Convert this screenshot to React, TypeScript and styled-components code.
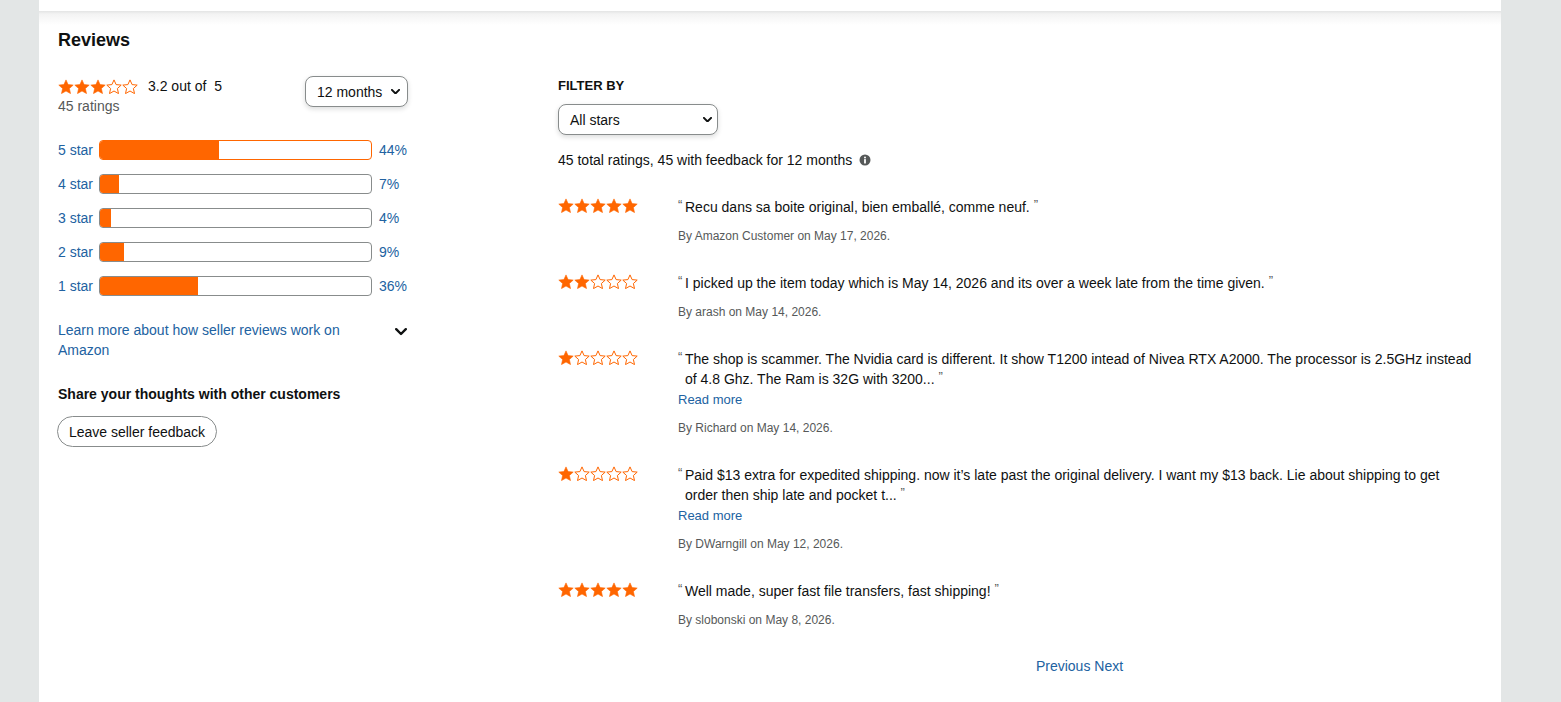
import React from "react";
import styled, { createGlobalStyle } from "styled-components";

const GlobalStyle = createGlobalStyle`
  html, body { margin: 0; padding: 0; background: #e3e6e6; }
  body {
    font-family: "Liberation Sans", Arial, sans-serif;
    color: #0f1111;
    font-size: 14px;
    line-height: 20px;
  }
  * { box-sizing: border-box; }
`;

const ORANGE = "#ff6600";
const LINK = "#2162a1";
const MUTED = "#565959";

const Page = styled.div`
  width: 1462px;
  margin-left: 39px;
  min-height: 702px;
  background: #fff;
`;

const TopCard = styled.div`
  height: 11px;
  background: #fff;
`;

const Shade = styled.div`
  height: 14px;
  background: linear-gradient(to bottom, #e3e4e4 0, #f3f3f3 3px, #ffffff 14px);
`;

const Section = styled.section`
  padding: 3px 20px 20px 19px;
`;

const Heading = styled.h2`
  margin: 0 0 24px 0;
  font-size: 18px;
  line-height: 24px;
  font-weight: 700;
`;

const Columns = styled.div`
  display: grid;
  grid-template-columns: 350px 1fr;
  column-gap: 150px;
`;

const LeftCol = styled.div`
  display: flex;
  flex-direction: column;
`;

const SummaryRow = styled.div`
  display: flex;
  justify-content: space-between;
  align-items: flex-start;
`;

const SummaryText = styled.div`
  display: flex;
  flex-direction: column;
`;

const StarLine = styled.div`
  display: flex;
  align-items: center;
  height: 20px;
  gap: 10px;
  font-size: 14px;
`;

const Muted = styled.div`
  color: ${MUTED};
  font-size: 14px;
  line-height: 20px;
`;

const Dropdown = styled.div<{ $w: number }>`
  width: ${(p) => p.$w}px;
  height: 31px;
  border: 1px solid #888c8c;
  border-radius: 8px;
  box-shadow: 0 2px 5px rgba(15, 17, 17, 0.15);
  display: flex;
  align-items: center;
  justify-content: space-between;
  padding: 0 7px 0 11px;
  font-size: 14px;
  color: #0f1111;
  background: #fff;
`;

const Bars = styled.div`
  margin-top: 24px;
  display: flex;
  flex-direction: column;
  gap: 14px;
`;

const BarRow = styled.div`
  display: flex;
  align-items: center;
  height: 20px;
`;

const BarLabel = styled.a`
  width: 41px;
  color: ${LINK};
  text-decoration: none;
  font-size: 14px;
`;

const BarTrack = styled.div<{ $active?: boolean }>`
  width: 273px;
  height: 20px;
  border: 1px solid ${(p) => (p.$active ? ORANGE : "#888c8c")};
  border-radius: 4px;
  overflow: hidden;
  background: #fff;
`;

const BarFill = styled.div`
  height: 100%;
  background: ${ORANGE};
`;

const BarPct = styled.a`
  padding-left: 7px;
  color: ${LINK};
  text-decoration: none;
  font-size: 14px;
`;

const LearnRow = styled.div`
  margin-top: 24px;
  display: flex;
  justify-content: space-between;
  align-items: flex-start;
`;

const LearnLink = styled.a`
  width: 300px;
  color: ${LINK};
  font-size: 14px;
  line-height: 20px;
  text-decoration: none;
`;

const ChevronWrap = styled.span`
  display: flex;
  padding-top: 8px;
  padding-right: 1px;
`;

const SubHeading = styled.div`
  margin-top: 24px;
  font-size: 14px;
  line-height: 20px;
  font-weight: 700;
`;

const PillButton = styled.button`
  margin-top: 12px;
  margin-left: -1px;
  align-self: flex-start;
  height: 31px;
  width: 160px;
  border: 1px solid #888c8c;
  border-radius: 16px;
  background: #fff;
  font-family: inherit;
  font-size: 14px;
  color: #0f1111;
  padding: 0 10px;
  text-align: center;
`;

const RightCol = styled.div`
  display: flex;
  flex-direction: column;
`;

const FilterLabel = styled.div`
  font-size: 13px;
  font-weight: 700;
  line-height: 20px;
`;

const SelectBox = styled(Dropdown)`
  margin-top: 8px;
  padding: 0 5px 0 11px;
`;

const TotalLine = styled.div`
  margin-top: 15px;
  display: flex;
  align-items: center;
  gap: 7px;
  font-size: 14px;
`;

const ReviewList = styled.div`
  margin-top: 27px;
  display: flex;
  flex-direction: column;
  gap: 28px;
`;

const ReviewItem = styled.div`
  display: grid;
  grid-template-columns: 120px 1fr;
`;

const ReviewStars = styled.div`
  display: flex;
  height: 20px;
  align-items: center;
  margin-top: -2px;
`;

const ReviewBody = styled.div`
  display: flex;
  flex-direction: column;
`;

const QuoteRow = styled.div`
  display: flex;
  align-items: flex-start;
`;

const QuoteMark = styled.span`
  width: 7px;
  flex: none;
  color: ${MUTED};
  font-size: 13px;
  line-height: 15px;
`;

const QuoteText = styled.div`
  font-size: 14px;
  line-height: 20px;
  color: #0f1111;
  padding-right: 7px;
`;

const CloseQuote = styled.span`
  color: ${MUTED};
  font-size: 13px;
  line-height: 14px;
  display: inline-block;
  vertical-align: top;
  margin-top: 1px;
`;

const ReadMore = styled.a`
  margin-top: 2px;
  font-size: 13px;
  line-height: 18px;
  color: ${LINK};
  text-decoration: none;
`;

const Byline = styled.div`
  margin-top: 10px;
  font-size: 12px;
  line-height: 18px;
  color: ${MUTED};
`;

const Pager = styled.div`
  margin-top: 27px;
  display: grid;
  grid-template-columns: 120px 1fr;
`;

const PagerLinks = styled.div`
  text-align: center;
  color: ${LINK};
  font-size: 14px;
  line-height: 20px;
`;

const StarPath =
  "M8 0.9 L10.1 5.6 L15.2 6.1 L11.4 9.5 L12.5 14.6 L8 12 L3.5 14.6 L4.6 9.5 L0.8 6.1 L5.9 5.6 Z";

const Star = ({ filled }: { filled: boolean }) => (
  <svg width="16" height="15" viewBox="0 0 16 15" aria-hidden>
    <path
      d={StarPath}
      fill={filled ? ORANGE : "none"}
      stroke={ORANGE}
      strokeWidth={filled ? 0.6 : 1}
      strokeLinejoin="round"
    />
  </svg>
);

const StarGroup = styled.span`
  display: inline-flex;
`;

const Stars = ({ n }: { n: number }) => (
  <StarGroup>
    {[0, 1, 2, 3, 4].map((i) => (
      <Star key={i} filled={i < n} />
    ))}
  </StarGroup>
);

const Chevron = ({ size = 10, stroke = 2 }: { size?: number; stroke?: number }) => (
  <svg width={size} height={size * 0.65} viewBox="0 0 10 6.5" aria-hidden>
    <path
      d="M1 1 L5 5 L9 1"
      fill="none"
      stroke="#0f1111"
      strokeWidth={stroke}
      strokeLinecap="round"
      strokeLinejoin="round"
    />
  </svg>
);

const InfoIcon = () => (
  <svg width="12" height="12" viewBox="0 0 12 12" aria-hidden>
    <circle cx="6" cy="6" r="5.5" fill="#565959" />
    <circle cx="6" cy="3.4" r="1" fill="#fff" />
    <rect x="5.1" y="5" width="1.8" height="4.4" rx="0.5" fill="#fff" />
  </svg>
);

const bars = [
  { label: "5 star", pct: 44, active: true },
  { label: "4 star", pct: 7 },
  { label: "3 star", pct: 4 },
  { label: "2 star", pct: 9 },
  { label: "1 star", pct: 36 },
];

const reviews = [
  {
    stars: 5,
    text: "Recu dans sa boite original, bien emballé, comme neuf.",
    more: false,
    by: "By Amazon Customer on May 17, 2026.",
  },
  {
    stars: 2,
    text: "I picked up the item today which is May 14, 2026 and its over a week late from the time given.",
    more: false,
    by: "By arash on May 14, 2026.",
  },
  {
    stars: 1,
    text: "The shop is scammer. The Nvidia card is different. It show T1200 intead of Nivea RTX A2000. The processor is 2.5GHz instead of 4.8 Ghz. The Ram is 32G with 3200...",
    more: true,
    by: "By Richard on May 14, 2026.",
  },
  {
    stars: 1,
    text: "Paid $13 extra for expedited shipping. now it’s late past the original delivery. I want my $13 back. Lie about shipping to get order then ship late and pocket t...",
    more: true,
    by: "By DWarngill on May 12, 2026.",
  },
  {
    stars: 5,
    text: "Well made, super fast file transfers, fast shipping!",
    more: false,
    by: "By slobonski on May 8, 2026.",
  },
];

export default function App() {
  return (
    <>
      <GlobalStyle />
      <Page>
        <TopCard />
        <Shade />
        <Section>
          <Heading>Reviews</Heading>
          <Columns>
            <LeftCol>
              <SummaryRow>
                <SummaryText>
                  <StarLine>
                    <Stars n={3} />
                    <span>3.2 out of &nbsp;5</span>
                  </StarLine>
                  <Muted>45 ratings</Muted>
                </SummaryText>
                <Dropdown $w={103}>
                  <span>12 months</span>
                  <Chevron size={9} stroke={2.2} />
                </Dropdown>
              </SummaryRow>
              <Bars>
                {bars.map((b) => (
                  <BarRow key={b.label}>
                    <BarLabel href="#">{b.label}</BarLabel>
                    <BarTrack $active={b.active}>
                      <BarFill style={{ width: `${b.pct}%` }} />
                    </BarTrack>
                    <BarPct href="#">{b.pct}%</BarPct>
                  </BarRow>
                ))}
              </Bars>
              <LearnRow>
                <LearnLink href="#">Learn more about how seller reviews work on Amazon</LearnLink>
                <ChevronWrap>
                  <Chevron size={12} stroke={2} />
                </ChevronWrap>
              </LearnRow>
              <SubHeading>Share your thoughts with other customers</SubHeading>
              <PillButton>Leave seller feedback</PillButton>
            </LeftCol>
            <RightCol>
              <FilterLabel>FILTER BY</FilterLabel>
              <SelectBox $w={160}>
                <span>All stars</span>
                <Chevron size={9} stroke={2.2} />
              </SelectBox>
              <TotalLine>
                <span>45 total ratings, 45 with feedback for 12 months</span>
                <InfoIcon />
              </TotalLine>
              <ReviewList>
                {reviews.map((r, i) => (
                  <ReviewItem key={i}>
                    <ReviewStars>
                      <Stars n={r.stars} />
                    </ReviewStars>
                    <ReviewBody>
                      <QuoteRow>
                        <QuoteMark>“</QuoteMark>
                        <QuoteText>
                          {r.text} <CloseQuote>”</CloseQuote>
                        </QuoteText>
                      </QuoteRow>
                      {r.more && <ReadMore href="#">Read more</ReadMore>}
                      <Byline>{r.by}</Byline>
                    </ReviewBody>
                  </ReviewItem>
                ))}
              </ReviewList>
              <Pager>
                <span />
                <PagerLinks>Previous Next</PagerLinks>
              </Pager>
            </RightCol>
          </Columns>
        </Section>
      </Page>
    </>
  );
}
